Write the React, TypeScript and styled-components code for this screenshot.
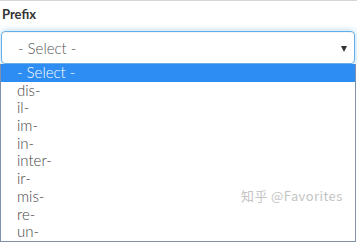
import styled, { createGlobalStyle } from 'styled-components';

const Global = createGlobalStyle`
  html, body { margin: 0; padding: 0; background: #fff; }
  body { font-family: Lato, "Open Sans", sans-serif; }
`;

const Page = styled.div`
  position: relative;
  width: 357px;
  height: 244px;
  overflow: hidden;
  border-top: 1px solid #d6d6d6;
  box-sizing: border-box;
`;

const Label = styled.div`
  font-size: 13px;
  font-weight: 700;
  color: #333;
  padding: 5px 0 0 2px;
  height: 30px;
  box-sizing: border-box;
`;

const SelectBox = styled.div`
  margin: 0 2px 0 1px;
  height: 33px;
  box-sizing: border-box;
  border: 1px solid #66afe9;
  border-radius: 4px;
  box-shadow: inset 0 1px 1px rgba(0, 0, 0, 0.05), 0 0 7px rgba(102, 175, 233, 0.55);
  display: flex;
  align-items: center;
  justify-content: space-between;
  padding: 0 7px 0 16px;
  font-size: 15px;
  font-weight: 300;
  color: #555;
`;

const Arrow = styled.span`
  width: 0;
  height: 0;
  border-left: 3.5px solid transparent;
  border-right: 3.5px solid transparent;
  border-top: 6px solid #333;
  margin-top: 2px;
`;

const List = styled.div`
  width: 356px;
  height: 178px;
  box-sizing: border-box;
  border: 1px solid #8190ad;
  border-top: none;
  display: flex;
  flex-direction: column;
`;

const Option = styled.div<{ $active?: boolean }>`
  height: 17.7px;
  line-height: 17.7px;
  padding-left: 16px;
  font-size: 15px;
  font-weight: 300;
  color: ${p => (p.$active ? '#fff' : '#444')};
  background: ${p => (p.$active ? '#2e8df2' : 'transparent')};
`;

const Watermark = styled.div`
  position: absolute;
  left: 241px;
  top: 185px;
  font-family: "Noto Sans CJK SC", "Noto Sans", sans-serif;
  font-size: 13px;
  color: #c4c4c4;
  letter-spacing: 0.4px;
  text-shadow: 0 0 2px #fff;
`;

const options = ['- Select -', 'dis-', 'il-', 'im-', 'in-', 'inter-', 'ir-', 'mis-', 're-', 'un-'];

export default function App() {
  return (
    <Page>
      <Global />
      <Label>Prefix</Label>
      <SelectBox>
        <span>- Select -</span>
        <Arrow />
      </SelectBox>
      <List>
        {options.map((o, i) => (
          <Option key={o} $active={i === 0}>{o}</Option>
        ))}
      </List>
      <Watermark>知乎 @Favorites</Watermark>
    </Page>
  );
}
